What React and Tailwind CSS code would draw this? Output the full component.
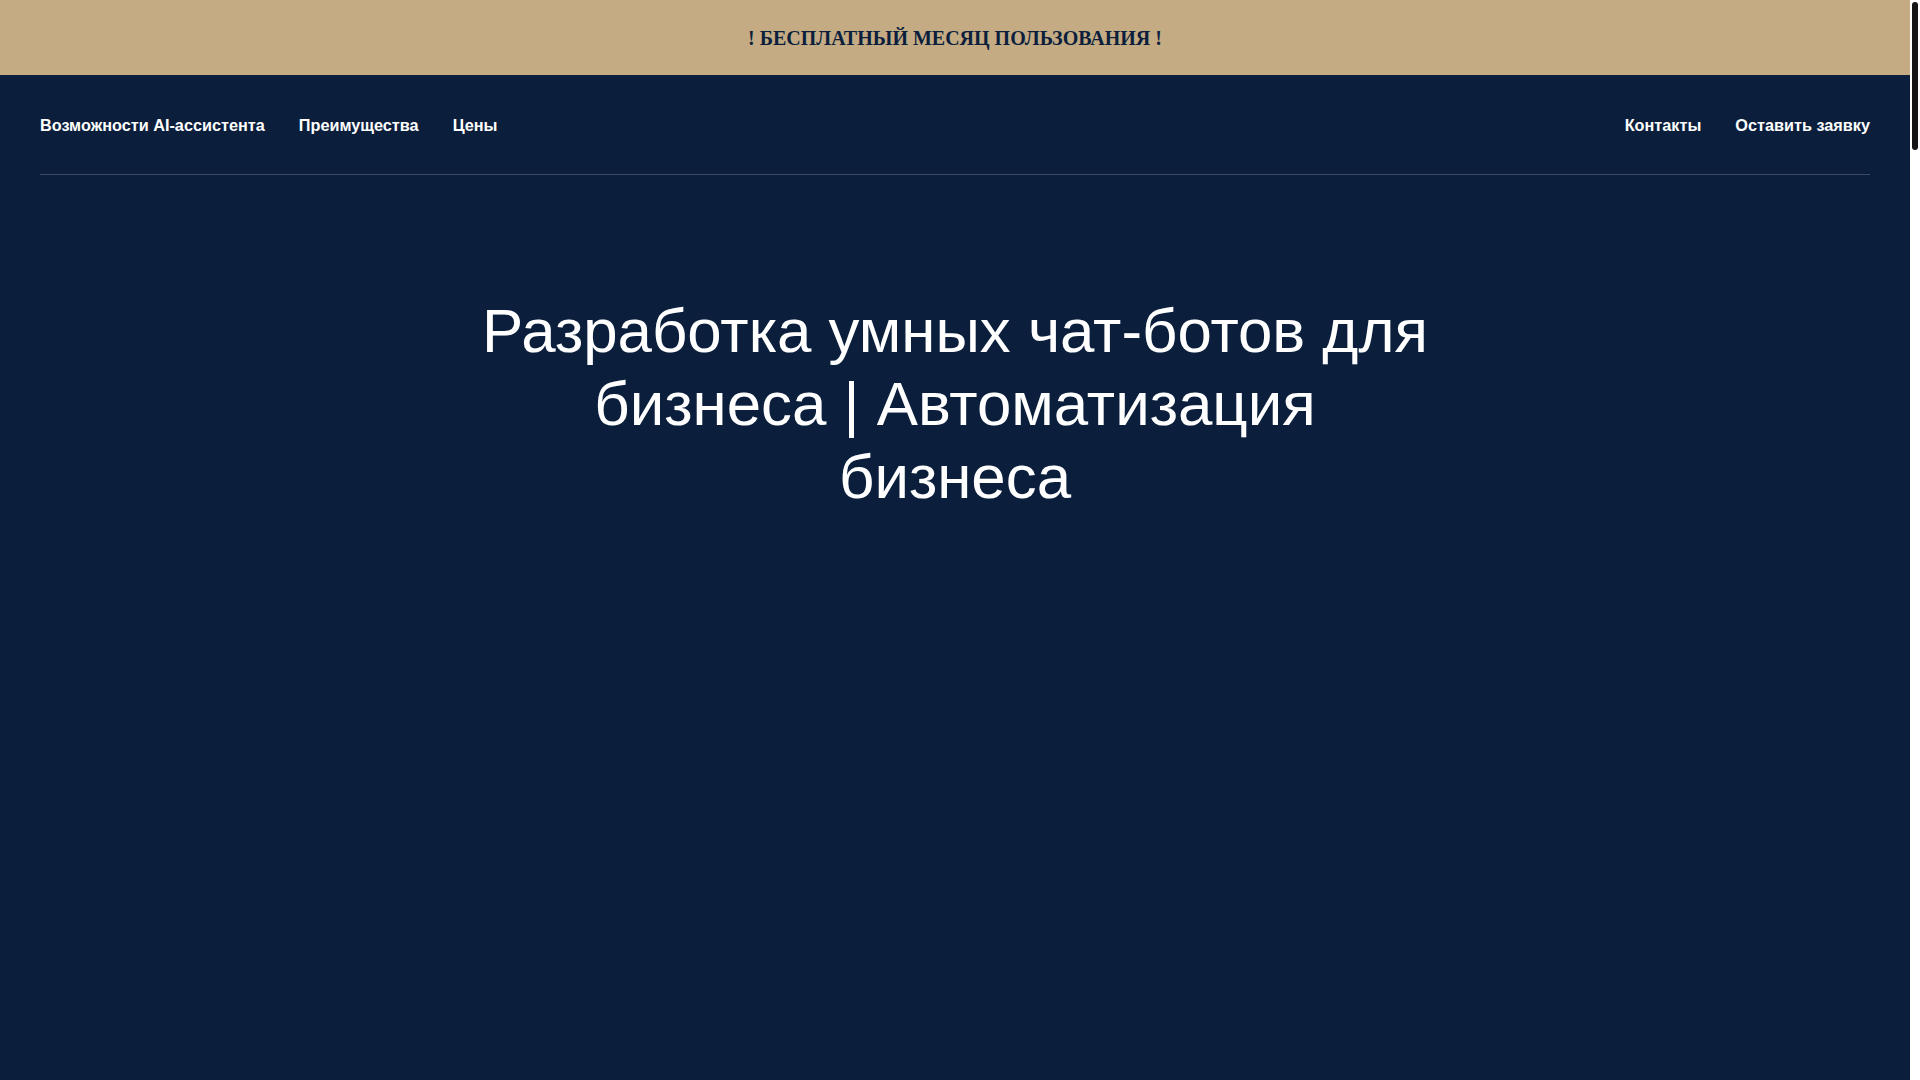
import React from 'react';

const leftLinks = ["Возможности AI-ассистента", "Преимущества", "Цены"];
const rightLinks = ["Контакты", "Оставить заявку"];

function TopBanner() {
  return (
    <div className="h-[75px] bg-[#c4ab83] flex items-center justify-center">
      <p className="font-['Liberation_Serif',serif] font-bold text-[20px] leading-6 text-[#0b1f3d] uppercase">
        ! Бесплатный месяц пользования !
      </p>
    </div>
  );
}

function NavBar() {
  return (
    <header className="px-10">
      <nav className="flex items-center justify-between pt-[40px] pb-[39px] border-b border-[#3a4a65]">
        <ul className="flex items-center gap-[34px] leading-5">
          {leftLinks.map((l) => (
            <li key={l}>
              <a href="#" className="block text-white text-[16.25px] font-bold leading-5">{l}</a>
            </li>
          ))}
        </ul>
        <ul className="flex items-center gap-[34px] leading-5">
          {rightLinks.map((l) => (
            <li key={l}>
              <a href="#" className="block text-white text-[16.25px] font-bold leading-5">{l}</a>
            </li>
          ))}
        </ul>
      </nav>
    </header>
  );
}

function Hero() {
  return (
    <section className="flex justify-center pt-[119px]">
      <h1 className="max-w-[960px] text-center text-white text-[61.8px] leading-[73px] font-normal">
        Разработка умных чат-ботов для бизнеса | Автоматизация бизнеса
      </h1>
    </section>
  );
}

// page scrollbar as it appears in the shot
function ScrollStrip() {
  return (
    <aside className="w-[10px] shrink-0 bg-white">
      <div className="mt-[2px] mx-[2px] h-[148px] rounded-full bg-[#151515]"></div>
    </aside>
  );
}

export default function App() {
  return (
    <div className="h-screen flex overflow-hidden font-['Liberation_Sans',Arial,sans-serif]">
      <main className="flex-1 bg-[#0b1f3d]">
        <TopBanner />
        <NavBar />
        <Hero />
      </main>
      <ScrollStrip />
    </div>
  );
}
